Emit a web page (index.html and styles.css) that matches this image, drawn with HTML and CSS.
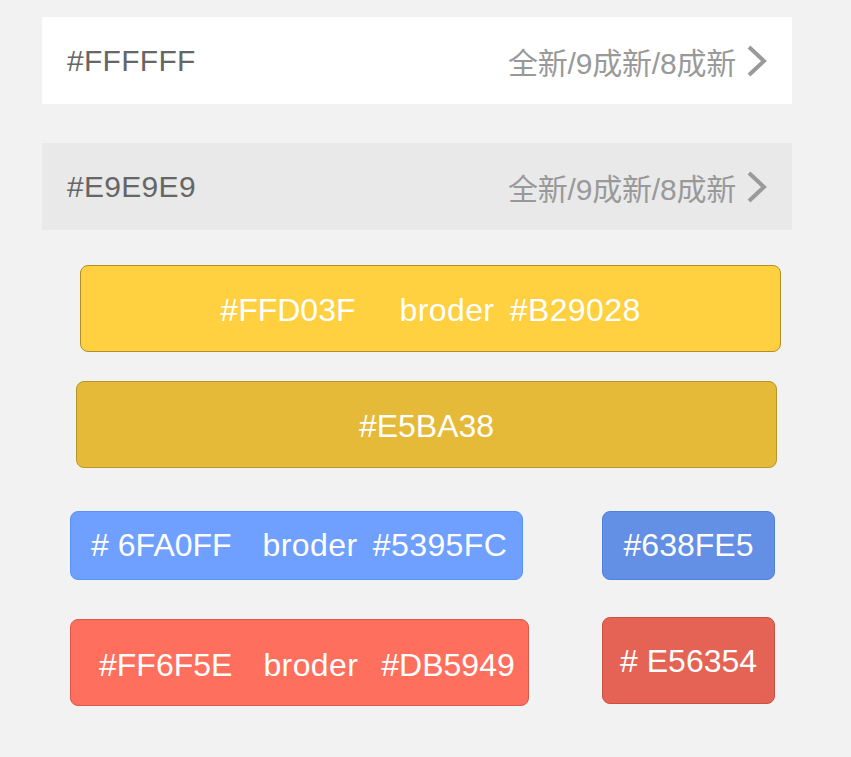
FILE: index.html
```html
<!DOCTYPE html>
<html lang="zh">
<head>
<meta charset="utf-8">
<link rel="stylesheet" href="styles.css">
</head>
<body>
<div class="page">
  <div class="row row-white">
    <span class="row-title">#FFFFFF</span>
    <span class="row-right"><span class="row-sub">全新/9成新/8成新</span>
      <svg class="chev" width="22" height="34" viewBox="0 0 22 34"><path d="M3 3 L18 17 L3 31" fill="none" stroke="#9a9a9a" stroke-width="4"/></svg>
    </span>
  </div>
  <div class="row row-grey">
    <span class="row-title">#E9E9E9</span>
    <span class="row-right"><span class="row-sub">全新/9成新/8成新</span>
      <svg class="chev" width="22" height="34" viewBox="0 0 22 34"><path d="M3 3 L18 17 L3 31" fill="none" stroke="#9a9a9a" stroke-width="4"/></svg>
    </span>
  </div>

  <div class="btn btn-yellow"><span>#FFD03F</span><span class="gap-l wide">broder #B29028</span></div>
  <div class="btn btn-yellow-dark"><span>#E5BA38</span></div>

  <div class="pair pair-blue">
    <div class="btn btn-blue"><span>#</span><span class="gap-s">6FA0FF</span><span class="gap-m wide">broder #5395FC</span></div>
    <div class="btn btn-blue-dark"><span>#638FE5</span></div>
  </div>

  <div class="pair pair-red">
    <div class="btn btn-red"><span>#FF6F5E</span><span class="gap-m wide">broder</span><span class="gap-r">#DB5949</span></div>
    <div class="btn btn-red-dark"><span>#</span><span class="gap-s">E56354</span></div>
  </div>
</div>
</body>
</html>
```

FILE: styles.css
```css
html, body {
  margin: 0;
  padding: 0;
  background: #f2f2f2;
}
body {
  font-family: "Liberation Sans", Arial, "Noto Sans CJK SC", sans-serif;
}
.page {
  width: 851px;
  height: 757px;
  padding-top: 17px;
  box-sizing: border-box;
  display: flex;
  flex-direction: column;
}
.row {
  margin-left: 42px;
  width: 750px;
  height: 87px;
  box-sizing: border-box;
  display: flex;
  align-items: center;
  justify-content: space-between;
  padding: 0 24px 0 25px;
}
.row-white { background: #ffffff; }
.row-grey { background: #e9e9e9; margin-top: 39px; }
.row-title {
  font-size: 30px;
  color: #666666;
  letter-spacing: 0.3px;
}
.row-right {
  display: flex;
  align-items: center;
}
.row-sub {
  font-size: 30px;
  color: #999999;
  letter-spacing: -0.2px;
  font-family: "Liberation Sans", "Noto Sans CJK SC", sans-serif;
}
.chev {
  margin-left: 10px;
  display: block;
}
.btn {
  box-sizing: border-box;
  border: 1.5px solid;
  border-radius: 8px;
  display: flex;
  align-items: center;
  color: #ffffff;
  font-size: 32px;
  white-space: nowrap;
}
.wide {
  letter-spacing: 0.4px;
  word-spacing: 6px;
}
.btn-yellow {
  margin-top: 35px;
  margin-left: 80px;
  width: 701px;
  height: 87px;
  background: #ffd03f;
  border-color: #b29028;
  justify-content: center;
  padding-top: 3px;
}
.btn-yellow-dark {
  margin-top: 29px;
  margin-left: 76px;
  width: 701px;
  height: 87px;
  background: #e5ba38;
  border-color: #b8952a;
  justify-content: center;
  padding-top: 3px;
}
.pair {
  display: flex;
  align-items: flex-start;
  margin-left: 70px;
  width: 705px;
  justify-content: space-between;
}
.pair-blue { margin-top: 43px; }
.pair-red { margin-top: 37px; }
.btn-blue {
  width: 453px;
  height: 69px;
  background: #6fa0ff;
  border-color: #5395fc;
  padding-left: 20px;
}
.btn-blue-dark {
  width: 173px;
  height: 69px;
  background: #638fe5;
  border-color: #4f82e0;
  justify-content: center;
}
.btn-red {
  margin-top: 2px;
  width: 459px;
  height: 87px;
  background: #ff6f5e;
  border-color: #db5949;
  padding-left: 28px;
  padding-top: 6px;
}
.btn-red-dark {
  width: 173px;
  height: 87px;
  background: #e56354;
  border-color: #cc5142;
  justify-content: center;
  padding-top: 2px;
}
.gap-s { margin-left: 9px; }
.gap-m { margin-left: 31px; }
.gap-l { margin-left: 44px; }
.gap-r { margin-left: 23px; }
```
